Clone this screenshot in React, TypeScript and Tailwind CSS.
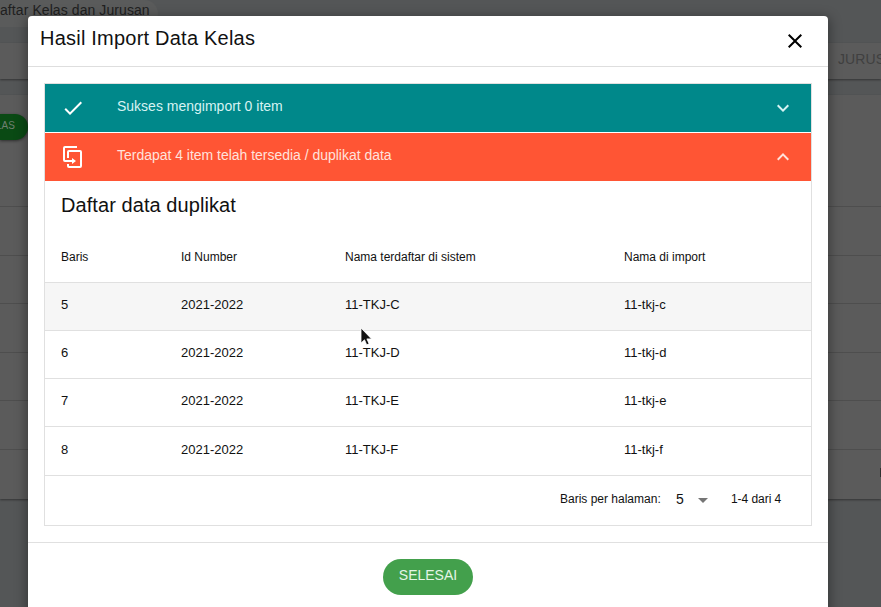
import React from "react";

const rows = [
  ["5", "2021-2022", "11-TKJ-C", "11-tkj-c"],
  ["6", "2021-2022", "11-TKJ-D", "11-tkj-d"],
  ["7", "2021-2022", "11-TKJ-E", "11-tkj-e"],
  ["8", "2021-2022", "11-TKJ-F", "11-tkj-f"],
];

const rowHeights = ["h-12", "h-12", "h-12", "h-[49px]"];

const backRows = ["h-[112px]", "h-[49px]", "h-12", "h-[49px]", "h-12", "h-[49px]"];

function Icon({ d, className = "" }: { d: string; className?: string }) {
  return (
    <svg viewBox="0 0 24 24" className={`size-6 shrink-0 fill-current ${className}`}>
      <path d={d} />
    </svg>
  );
}

function Backdrop() {
  return (
    <div className="h-full w-full overflow-hidden bg-[#545657] text-[#202020]">
      <div className="flex h-[43px] items-start">
        <div className="flex h-[27px] w-[158px] items-center rounded-r-2xl bg-[#5a5b5b] pb-[7px]">
          <span className="text-sm tracking-[0.08px] whitespace-nowrap">aftar Kelas dan Jurusan</span>
        </div>
      </div>
      <div className="flex h-9 items-center justify-end bg-[#5b5b5b] shadow-[0_1px_2px_0px_rgba(0,0,0,0.4)]">
        <span className="w-[43px] pb-1 text-sm tracking-[0.1px] whitespace-nowrap text-[#404040]">JURUS</span>
      </div>
      <div className="relative mt-4 h-[404px] bg-[#5b5b5b] shadow-[0_1px_2px_0px_rgba(0,0,0,0.4)]">
        {backRows.map((h, i) => (
          <div key={i} className={`border-b border-[#4e4e4e] ${h}`} />
        ))}
        <div className="absolute top-[19px] left-0 flex h-[26px] w-7 items-center rounded-r-full bg-[#0a4a14] pb-[3px] text-[10px] text-[#6f7f71] shadow-[0_1px_3px_rgba(0,0,0,0.5)]">
          <span className="-ml-1">LAS</span>
        </div>
        <div className="absolute right-0 bottom-[22px] h-[9px] w-px bg-[#303030]" />
      </div>
    </div>
  );
}

export default function App() {
  return (
    <div className="relative h-[607px] w-[881px] overflow-hidden font-['Liberation_Sans',Arial,sans-serif] text-[#111]">
      <Backdrop />
      <div className="absolute top-4 left-7 flex h-[620px] w-[800px] flex-col rounded-t bg-white shadow-[0_3px_12px_2px_rgba(0,0,0,0.35)]">
        <header className="flex h-[51px] items-center justify-between border-b border-[#dedede] pr-[21px] pl-3">
          <h1 className="pb-1.5 text-xl tracking-[0.22px]">Hasil Import Data Kelas</h1>
          <Icon className="text-black" d="M19 6.41 17.59 5 12 10.59 6.41 5 5 6.41 10.59 12 5 17.59 6.41 19 12 13.41 17.59 19 19 17.59 13.41 12z" />
        </header>

        <main className="mx-4 mt-4 flex h-[443px] flex-col border border-[#e0e0e0]">
          <div className="flex h-12 shrink-0 items-center bg-[#00888a] px-4 text-[#d6f3f3]">
            <Icon className="text-white" d="M21 7 9 19l-5.5-5.5 1.41-1.41L9 16.17 19.59 5.59 21 7Z" />
            <span className="ml-8 flex-1 pb-1 text-sm">Sukses mengimport 0 item</span>
            <Icon d="M7.41 8.59 12 13.17l4.59-4.58L18 10l-6 6-6-6z" />
          </div>
          <div className="mt-px flex h-12 shrink-0 items-center bg-[#ff5534] px-4 text-[#ffe2dc]">
            <Icon className="text-white" d="M11 17H4a2 2 0 0 1-2-2V3a2 2 0 0 1 2-2h12v2H4v12h7v-2l4 3-4 3v-2m8 4V7H8v6H6V7a2 2 0 0 1 2-2h11a2 2 0 0 1 2 2v14a2 2 0 0 1-2 2H8a2 2 0 0 1-2-2v-2h2v2h11Z" />
            <span className="ml-8 flex-1 pb-1 text-sm tracking-[-0.02px]">Terdapat 4 item telah tersedia / duplikat data</span>
            <Icon d="M7.41 15.41 12 10.83l4.59 4.58L18 14l-6-6-6 6z" />
          </div>
          <h2 className="flex h-[51px] shrink-0 items-center pb-[3px] pl-4 text-xl tracking-[0.07px]">Daftar data duplikat</h2>
          <div className="grid h-[51px] shrink-0 grid-cols-[120px_164px_279px_1fr] items-center border-b border-[#e0e0e0] pl-4 text-xs">
            <span>Baris</span>
            <span>Id Number</span>
            <span>Nama terdaftar di sistem</span>
            <span>Nama di import</span>
          </div>
          {rows.map((r, i) => (
            <div
              key={r[0]}
              className={`grid shrink-0 grid-cols-[120px_164px_279px_1fr] items-center border-b border-[#e0e0e0] pb-[3px] pl-4 text-[13px] ${rowHeights[i]} ${i === 0 ? "bg-[#f6f6f6]" : ""}`}
            >
              {r.map((c) => (
                <span key={c}>{c}</span>
              ))}
            </div>
          ))}
          <footer className="flex flex-1 items-center pl-[515px] text-xs whitespace-nowrap">
            <span className="w-[116px] pb-[3px]">Baris per halaman:</span>
            <span className="w-[15px] pb-1 text-sm">5</span>
            <Icon className="mb-0.5 text-[#757575]" d="M7 10l5 5 5-5z" />
            <span className="ml-4 pb-[3px] tracking-[-0.05px]">1-4 dari 4</span>
          </footer>
        </main>

        <div className="mt-4 flex justify-center border-t border-[#e0e0e0] pt-4">
          <button className="h-9 w-[90px] rounded-full bg-[#43a04c] pb-[5px] text-sm text-[#e5f5e6]">SELESAI</button>
        </div>
      </div>
      <svg viewBox="0 0 12 19" className="absolute top-[327px] left-[360px] h-[19px] w-3">
        <path d="M1 1v15l3.5-3.2 2.2 5 2.4-1-2.2-4.9h4.6z" fill="#111" stroke="#fff" strokeWidth="0.8" />
      </svg>
    </div>
  );
}
